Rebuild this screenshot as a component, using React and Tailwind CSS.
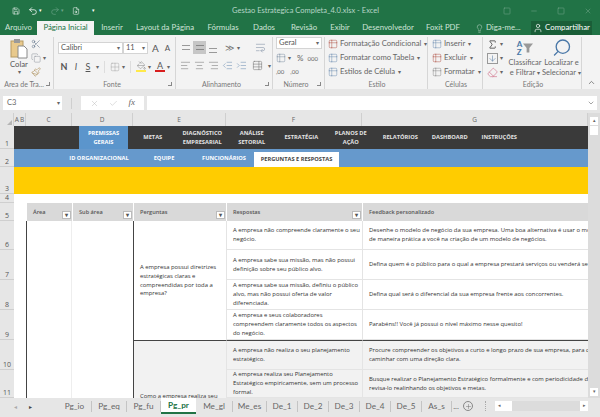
import {
  Save, Undo2, Redo2, FileSearch, Lightbulb, User, Scissors, Copy, Paintbrush, ChevronDown, ChevronUp,
  X, Check, Grid2x2, AlignLeft, AlignCenter, AlignRight, Indent, Outdent, WrapText, TableProperties,
  Sigma, ArrowDown, Eraser, Search, Plus, Minus, Square, Table2, PaintBucket,
} from "lucide-react";

const caret = <span className="ml-[2px] text-[6px] leading-none text-[#666]">▾</span>;

function Group({ width, label, launcher, children }) {
  return (
    <div className={`${width} flex h-full shrink-0 flex-col border-r border-[#d6d6d6]`}>
      <div className="min-h-0 flex-1">{children}</div>
      <div className="flex h-[10px] items-center justify-center text-[7px] leading-none text-[#777]">
        <span className="flex-1 truncate pl-[2px] text-center">{label}</span>
        {launcher && <span className="mr-[3px] h-[4px] w-[4px] border-b border-r border-[#888]" />}
      </div>
    </div>
  );
}

function Dropdown({ text, width }) {
  return (
    <div className={`${width} flex h-[12px] items-center justify-between border border-[#d4d4d4] bg-white pl-[2px] pr-[2px] text-[7.5px] text-[#555]`}>
      <span>{text}</span>
      {caret}
    </div>
  );
}

function StyleRow({ label, color, size }) {
  return (
    <div className="flex h-[14px] items-center gap-[1px] whitespace-nowrap text-[7.7px] text-[#666]">
      <Table2 size={size} strokeWidth={1.2} className={`${color} shrink-0`} />
      <span className="ml-[1px]">{label}</span>
      {caret}
    </div>
  );
}

function Ribbon() {
  return (
    <div className="flex h-[54px] bg-[#f3f3f3] pt-[2px]">
      <Group width="w-[54px]" label="Área de Tra..." launcher>
        <div className="flex pl-[8px] pt-[1px]">
          <div className="flex w-[22px] flex-col items-center">
            <svg width="18" height="21" viewBox="0 0 18 21">
              <rect x="1" y="3" width="12" height="16" fill="#e8c98c" stroke="#b69a62" />
              <rect x="4" y="1" width="6" height="4" fill="#9a9a9a" />
              <path d="M8 8h6l3 3v9H8z" fill="#fff" stroke="#8a8a8a" />
            </svg>
            <span className="text-[7.7px] leading-[10px] text-[#555]">Colar</span>
            <span className="text-[6px] leading-[6px] text-[#666]">▾</span>
          </div>
          <div className="flex flex-col gap-[4px] pl-[1px] pt-[1px]">
            <Scissors size={10} strokeWidth={1.3} className="text-[#5b6f86]" />
            <div className="flex items-center">
              <Copy size={10} strokeWidth={1.2} className="text-[#8a9099]" />
              {caret}
            </div>
            <Paintbrush size={10} strokeWidth={1.3} className="text-[#a58449]" />
          </div>
        </div>
      </Group>
      <Group width="w-[122px]" label="Fonte" launcher>
        <div className="flex flex-col gap-[6px] pl-[4px] pt-[5px]">
          <div className="flex items-center">
            <Dropdown text="Calibri" width="w-[65px]" />
            <Dropdown text="11" width="w-[25px]" />
            <span className="ml-[4px] text-[10px] leading-none text-[#555]">A</span>
            <span className="ml-[6px] text-[8px] leading-none text-[#555]">A</span>
          </div>
          <div className="flex items-center text-[9px] text-[#555]">
            <span className="w-[12px] text-center font-bold">N</span>
            <span className="w-[12px] text-center italic">I</span>
            <span className="w-[12px] text-center underline">S</span>
            {caret}
            <span className="mx-[5px] h-[12px] border-l border-[#ddd]" />
            <Grid2x2 size={10} strokeWidth={1} className="text-[#999]" />
            {caret}
            <span className="mx-[5px] h-[12px] border-l border-[#ddd]" />
            <span className="flex flex-col items-center">
              <PaintBucket size={9} strokeWidth={1.2} className="text-[#777]" />
              <span className="h-[2px] w-[10px] bg-[#ffe94a]" />
            </span>
            {caret}
            <span className="ml-[4px] flex flex-col items-center text-[9px] leading-[9px]">
              A
              <span className="h-[2px] w-[10px] bg-[#d81e1e]" />
            </span>
            {caret}
          </div>
        </div>
      </Group>
      <Group width="w-[97px]" label="Alinhamento" launcher>
        <div className="flex flex-col gap-[6px] pl-[4px] pt-[4px] text-[#777]">
          <div className="flex items-center gap-[1px]">
            <span className="flex h-[13px] w-[12px] items-center justify-center"><span className="h-[5px] w-[8px] border-y border-[#999]" /></span>
            <span className="flex h-[13px] w-[13px] items-center justify-center bg-[#c6c6c6]"><span className="h-[5px] w-[8px] border-y border-[#888]" /></span>
            <span className="flex h-[13px] w-[12px] items-end justify-center pb-[1px]"><span className="h-[5px] w-[8px] border-y border-[#999]" /></span>
            <span className="ml-[5px] text-[9px] leading-none text-[#777]">≫</span>
            {caret}
            <WrapText size={11} strokeWidth={1.2} className="ml-[14px] text-[#7d8ea3]" />
          </div>
          <div className="flex items-center gap-[3px]">
            <AlignLeft size={11} strokeWidth={1.2} />
            <AlignCenter size={11} strokeWidth={1.2} />
            <AlignRight size={11} strokeWidth={1.2} />
            <Outdent size={11} strokeWidth={1.2} className="text-[#6e8fb3]" />
            <Indent size={11} strokeWidth={1.2} className="text-[#6e8fb3]" />
            <TableProperties size={11} strokeWidth={1.2} className="ml-[2px]" />
            {caret}
          </div>
        </div>
      </Group>
      <Group width="w-[52px]" label="Número" launcher>
        <div className="flex flex-col pl-[3px]">
          <Dropdown text="Geral" width="w-[46px]" />
          <div className="mt-[3px] flex items-center text-[8px] text-[#666]">
            <Table2 size={10} strokeWidth={1.2} className="text-[#7d8ea3]" />
            {caret}
            <span className="ml-[6px]">%</span>
            <span className="ml-[4px] text-[6px]">000</span>
          </div>
          <div className="mt-[4px] flex gap-[6px] text-[6px] leading-[8px] text-[#666]">
            <span>,00</span>
            <span>,00</span>
          </div>
        </div>
      </Group>
      <Group width="w-[103px]" label="Estilo">
        <div className="pl-[3px]">
          <StyleRow label="Formatação Condicional" color="text-[#b3574a]" size={10} />
          <StyleRow label="Formatar como Tabela" color="text-[#6e8fb3]" size={10} />
          <StyleRow label="Estilos de Célula" color="text-[#6e8fb3]" size={10} />
        </div>
      </Group>
      <Group width="w-[55px]" label="Células">
        <div className="pl-[4px]">
          <StyleRow label="Inserir" color="text-[#6e8fb3]" size={10} />
          <StyleRow label="Excluir" color="text-[#b3574a]" size={10} />
          <StyleRow label="Formatar" color="text-[#888]" size={10} />
        </div>
      </Group>
      <Group width="w-[99px]" label="Edição">
        <div className="flex pl-[4px]">
          <div className="flex w-[21px] flex-col">
            <div className="flex h-[14px] items-center"><Sigma size={11} strokeWidth={2} className="text-[#555]" />{caret}</div>
            <div className="flex h-[14px] items-center"><ArrowDown size={11} strokeWidth={1.5} className="border border-[#999] text-[#5b7ea6]" />{caret}</div>
            <div className="flex h-[14px] items-center"><Eraser size={11} strokeWidth={1.4} className="text-[#d0708a]" />{caret}</div>
          </div>
          <div className="flex w-[34px] flex-col items-center text-[7.5px] leading-[10px] text-[#666]">
            <span className="flex h-[21px] items-center gap-[1px]">
              <span className="flex flex-col text-[8px] font-bold leading-[8px] text-[#4a78a8]"><span>A</span><span>Z</span></span>
              <svg width="10" height="12" viewBox="0 0 11 12"><path d="M0 1h11L7 6v5H4V6z" fill="#999" /></svg>
            </span>
            <span>Classificar</span>
            <span className="whitespace-nowrap">e Filtrar{caret}</span>
          </div>
          <div className="ml-[1px] flex w-[37px] flex-col items-center text-[7.5px] leading-[10px] text-[#666]">
            <Search size={20} strokeWidth={1.6} className="h-[21px] -scale-x-100 text-[#4a78a8]" />
            <span className="whitespace-nowrap">Localizar e</span>
            <span className="whitespace-nowrap">Selecionar{caret}</span>
          </div>
        </div>
      </Group>
      <div className="flex flex-1 items-end justify-center pb-[2px]">
        <ChevronUp size={9} strokeWidth={2} className="text-[#666]" />
      </div>
    </div>
  );
}

function FormulaBar() {
  return (
    <div className="flex h-[24px] items-center bg-[#e6e6e6] px-[3px] pt-[4px]">
      <div className="flex h-[14px] w-[59px] items-center justify-between bg-white pl-[4px] pr-[2px] text-[7.5px] text-[#666]">
        <span>C3</span>
        {caret}
      </div>
      <span className="mx-[9px] h-[11px] border-l border-[#cfcfcf]" />
      <div className="flex h-[14px] w-[63px] items-center justify-around bg-white px-[4px] text-[#bbb]">
        <X size={9} strokeWidth={1.3} />
        <Check size={9} strokeWidth={1.3} />
        <span className="font-['Liberation_Serif',serif] text-[9px] italic text-[#666]">fx</span>
      </div>
      <div className="ml-[3px] flex h-[14px] flex-1 items-center justify-end bg-white pr-[2px]">
        <ChevronDown size={8} strokeWidth={2} className="text-[#777]" />
      </div>
    </div>
  );
}

const navItems = [
  ["METAS"],
  ["DIAGNÓSTICO", "EMPRESARIAL"],
  ["ANÁLISE", "SETORIAL"],
  ["ESTRATÉGIA"],
  ["PLANOS DE", "AÇÃO"],
  ["RELATÓRIOS"],
  ["DASHBOARD"],
  ["INSTRUÇÕES"],
];

function NavBand() {
  return (
    <div className="col-start-2 col-end-8 row-start-2 flex items-stretch bg-[#3a3a3a] pl-[65px] text-center text-[5.7px] font-bold leading-[8.5px] text-[#e4e4e4]">
      <div className="flex w-[49px] flex-col items-center justify-center bg-[#5b95cc] text-white">
        <span>PREMISSAS</span>
        <span>GERAIS</span>
      </div>
      {navItems.map((lines) => (
        <div key={lines[0]} className="flex w-[49.5px] flex-col items-center justify-center">
          {lines.map((l) => <span key={l} className="whitespace-nowrap">{l}</span>)}
        </div>
      ))}
    </div>
  );
}

function SubNav() {
  return (
    <div className="col-start-2 col-end-8 row-start-3 flex items-stretch bg-[#6699cc] pl-[50px] text-[5.7px] font-bold text-white">
      <div className="flex w-[70px] items-center justify-center whitespace-nowrap">ID ORGANIZACIONAL</div>
      <div className="flex w-[60px] items-center justify-center">EQUIPE</div>
      <div className="flex w-[60px] items-center justify-center">FUNCIONÁRIOS</div>
      <div className="mt-[3px] flex w-[85px] items-center justify-center whitespace-nowrap bg-white text-[#444]">PERGUNTAS E RESPOSTAS</div>
    </div>
  );
}

function HeaderCell({ col, text, filter }) {
  return (
    <div className={`${col} row-start-7 flex items-center justify-between border-l border-white bg-[#d9d9d9] pl-[6px] pr-[1px] text-[5.6px] font-semibold text-[#555]`}>
      <span>{text}</span>
      {filter && (
        <span className="mt-[6px] flex h-[8px] w-[9px] items-center justify-center border border-[#bbb] bg-white text-[6px] leading-none text-[#555]">▾</span>
      )}
    </div>
  );
}

const rowLabels = ["1", "2", "3", "4", "5", "6", "7", "8", "9", "10", "11"];
const rowClass = ["row-start-2", "row-start-3", "row-start-4", "row-start-5", "row-start-7", "row-start-8", "row-start-9", "row-start-10", "row-start-11", "row-start-12", "row-start-13"];

const answers = [
  { row: "row-start-8", shade: false, a: ["A empresa não compreende claramente o seu", "negócio."], f: ["Desenhe o modelo de negócio da sua empresa. Uma boa alternativa é usar o modelo Canvas", "de maneira prática a você na criação de um modelo de negócios."] },
  { row: "row-start-9", shade: false, a: ["A empresa sabe  sua missão, mas não possui", "definição sobre seu público alvo."], f: ["Defina quem é o público para o qual a empresa prestará serviços ou venderá seus produtos."] },
  { row: "row-start-10", shade: false, a: ["A empresa sabe sua missão, definiu o público", "alvo, mas não possui oferta de valor", "diferenciada."], f: ["Defina qual será o diferencial da sua empresa frente aos concorrentes."] },
  { row: "row-start-11", shade: false, a: ["A empresa e seus colaboradores", "compreendem claramente todos os aspectos", "do negócio."], f: ["Parabéns!! Você já possui o nível máximo nesse quesito!"] },
  { row: "row-start-12", shade: true, a: ["A empresa não realiza o seu planejamento", "estratégico."], f: ["Procure compreender os objetivos a curto e longo prazo de sua empresa, para que possa", "caminhar com uma direção clara."] },
  { row: "row-start-13", shade: true, a: ["A empresa realiza seu Planejamento", "Estratégico empiricamente, sem um processo", "formal."], f: ["Busque realizar o Planejamento Estratégico formalmente e com periodicidade definida,", "revisa-lo realinhando os objetivos e metas."] },
];

function Sheet() {
  return (
    <div className="grid min-w-0 flex-1 grid-cols-[14px_12px_46px_61px_93px_136px_226px] grid-rows-[13px_23px_18px_27px_9px_0px_18px_29px_30px_30px_30px_30px_28px] overflow-hidden bg-white font-['Open_Sans',sans-serif]">
      {/* cabeçalho das colunas */}
      <div className="col-start-1 row-start-1 flex items-end justify-end border-r border-[#cfcfcf] bg-[#e6e6e6] pb-[1px] pr-[1px]">
        <span className="h-0 w-0 border-b-[5px] border-l-[5px] border-b-[#b5b5b5] border-l-transparent" />
      </div>
      <div className="col-start-2 row-start-1 flex items-center justify-center gap-[1px] border-r border-[#cfcfcf] bg-[#e6e6e6] text-[6.5px] text-[#666]">
        <span>A</span><span>B</span>
      </div>
      {["C", "D", "E", "F", "G"].map((c, i) => (
        <div
          key={c}
          className={`${["col-start-3", "col-start-4", "col-start-5", "col-start-6", "col-start-7"][i]} row-start-1 flex items-center justify-center border-r border-[#cfcfcf] bg-[#e6e6e6] text-[6.5px] text-[#666]`}
        >
          {c}
        </div>
      ))}

      {/* cabeçalho das linhas */}
      {rowLabels.map((n, i) => (
        <div key={n} className={`col-start-1 ${rowClass[i]} flex items-end justify-center border-b border-[#cfcfcf] bg-[#e6e6e6] pb-[1px] text-[7px] leading-none text-[#555]`}>
          {n}
        </div>
      ))}

      <NavBand />
      <SubNav />
      <div className="col-start-2 col-end-8 row-start-4 bg-[#ffcc00]" />

      <HeaderCell col="col-start-3" text="Área" filter />
      <HeaderCell col="col-start-4" text="Sub área" filter />
      <HeaderCell col="col-start-5" text="Perguntas" filter />
      <HeaderCell col="col-start-6" text="Respostas" filter />
      <HeaderCell col="col-start-7" text="Feedback personalizado" />

      <div className="col-start-3 row-start-8 row-end-14 border-l border-r border-l-[#444] border-r-[#eee]" />
      <div className="col-start-4 row-start-8 row-end-14" />
      <div className="col-start-5 row-start-8 row-end-12 flex items-center border-l border-[#444] pl-[6px] pr-[2px] text-[5.9px] leading-[8.7px] text-[#333]">
        <span>A empresa possui diretrizes estratégicas claras e compreendidas por toda a empresa?</span>
      </div>
      <div className="col-start-5 row-start-12 row-end-14 overflow-hidden border-l border-t border-[#444] bg-[#f2f2f2] pl-[6px] pr-[2px] pt-[51px] text-[5.9px] leading-[8.7px] text-[#333]">
        Como a empresa realiza seu
      </div>

      {answers.map((r) => (
        <div key={r.row} className="contents">
          <div className={`col-start-6 ${r.row} flex flex-col justify-center overflow-hidden border-b border-l border-[#e4e4e4] ${r.shade ? "bg-[#f2f2f2]" : "bg-white"} ${r.row === "row-start-12" ? "border-t border-t-[#444]" : ""} pl-[6px] text-[5.9px] leading-[8.8px] text-[#333]`}>
            {r.a.map((l) => <span key={l} className="whitespace-nowrap">{l}</span>)}
          </div>
          <div className={`col-start-7 ${r.row} flex flex-col justify-center overflow-hidden border-b border-l border-[#e4e4e4] ${r.shade ? "bg-[#f2f2f2]" : "bg-white"} ${r.row === "row-start-12" ? "border-t border-t-[#444]" : ""} pl-[6px] text-[5.9px] leading-[8.8px] text-[#333]`}>
            {r.f.map((l) => <span key={l} className="whitespace-nowrap">{l}</span>)}
          </div>
        </div>
      ))}
    </div>
  );
}

const tabs = [
  ["Pg_io", "w-[34px]"], ["Pg_eq", "w-[35px]"], ["Pg_fu", "w-[34px]"], ["Pg_pr", "w-[35px]"],
  ["Me_gl", "w-[37px]"], ["Me_es", "w-[34px]"], ["De_1", "w-[31px]"], ["De_2", "w-[31px]"],
  ["De_3", "w-[31px]"], ["De_4", "w-[31px]"], ["De_5", "w-[31px]"], ["As_s", "w-[30px]"],
];

function SheetTabs() {
  return (
    <div className="flex h-[16px] items-center bg-[#e6e6e6] font-['Lato',sans-serif] text-[8.2px] text-[#666]">
      <div className="flex w-[58px] items-center gap-[12px] pl-[14px] text-[#aaa]">
        <span className="text-[6px]">◂</span>
        <span className="text-[6px] text-[#444]">▸</span>
      </div>
      {tabs.map(([t, w]) => (
        <div
          key={t}
          className={
            t === "Pg_pr"
              ? `flex h-full ${w} items-center justify-center border-b-2 border-[#217346] bg-white font-bold text-[#217346]`
              : `flex h-[11px] ${w} items-center justify-center border-r border-[#c4c4c4]`
          }
        >
          {t}
        </div>
      ))}
      <span className="w-[8px] text-center text-[8px]">...</span>
      <span className="ml-[3px] flex h-[10px] w-[10px] items-center justify-center rounded-full border border-[#888]">
        <Plus size={7} strokeWidth={1.5} />
      </span>
      <span className="ml-[12px] h-[10px] border-l border-dotted border-[#aaa]" />
      <div className="ml-[9px] flex h-[10px] flex-1 items-center bg-[#dcdcdc]">
        <span className="flex h-full w-[8px] items-center justify-center bg-white text-[5px]">◂</span>
        <span className="h-full w-[9px] bg-white" />
        <span className="flex-1" />
        <span className="flex h-full w-[8px] items-center justify-center bg-white text-[5px]">▸</span>
      </div>
      <span className="w-[12px]" />
    </div>
  );
}

export default function App() {
  return (
    <div className="flex h-[417px] w-[600px] flex-col overflow-hidden bg-[#e6e6e6] font-['Lato',sans-serif]">
      <div className="flex h-[21px] items-center bg-[#217346] pl-[12px] text-white">
        <div className="flex w-[83px] items-center gap-[8px]">
          <Save size={10} strokeWidth={1.6} />
          <span className="flex items-center"><Undo2 size={10} strokeWidth={1.8} /><span className="ml-[1px] text-[5px]">▾</span></span>
          <span className="flex items-center text-[#6da58a]"><Redo2 size={10} strokeWidth={1.5} /><span className="ml-[1px] text-[5px]">▾</span></span>
          <FileSearch size={10} strokeWidth={1.5} />
          <span className="ml-[4px] text-[5px]">▾</span>
        </div>
        <span className="ml-[137px] text-[7.5px] text-[#b6d6c6]">Gestao Estrategica Completa_4.0.xlsx - Excel</span>
        <span className="ml-auto flex items-center gap-[19px] pr-[8px] text-[#8db8a2]">
          <Square size={8} strokeWidth={1.2} />
          <Minus size={8} strokeWidth={1.2} />
          <Square size={8} strokeWidth={1.2} />
          <X size={8} strokeWidth={1.2} />
        </span>
      </div>

      <div className="flex h-[14px] items-stretch bg-[#217346] pl-[5px] text-[7.8px] text-[#cfe3d8]">
        <span className="flex w-[32px] items-center">Arquivo</span>
        <span className="flex w-[57px] items-center justify-center bg-[#f3f3f3] text-[#217346]">Página Inicial</span>
        {[["Inserir", "w-[36px]"], ["Layout da Página", "w-[70px]"], ["Fórmulas", "w-[46px]"], ["Dados", "w-[36px]"], ["Revisão", "w-[44px]"], ["Exibir", "w-[28px]"], ["Desenvolvedor", "w-[68px]"], ["Foxit PDF", "w-[42px]"]].map(([t, w]) => (
          <span key={t} className={`flex ${w} items-center justify-center whitespace-nowrap`}>{t}</span>
        ))}
        <span className="ml-[11px] flex w-[56px] items-center gap-[2px]"><Lightbulb size={9} strokeWidth={1.3} className="shrink-0" />Diga-me...</span>
        <span className="flex w-[61px] items-center justify-center gap-[2px] bg-[#1a5e38] text-white"><User size={10} strokeWidth={1.6} className="shrink-0" />Compartilhar</span>
      </div>

      <Ribbon />
      <FormulaBar />

      <div className="flex min-h-0 flex-1">
        <Sheet />
        <div className="flex w-[12px] flex-col items-center bg-[#dcdcdc] pt-[4px]">
          <span className="flex h-[8px] w-[8px] items-center justify-center bg-white text-[5px] text-[#666]">▴</span>
          <span className="mt-[1px] h-[9px] w-[8px] bg-white" />
          <span className="mb-[2px] mt-auto flex h-[8px] w-[8px] items-center justify-center bg-white text-[5px] text-[#666]">▾</span>
        </div>
      </div>

      <SheetTabs />
      <div className="h-[3px] bg-[#e6e6e6]" />
    </div>
  );
}
